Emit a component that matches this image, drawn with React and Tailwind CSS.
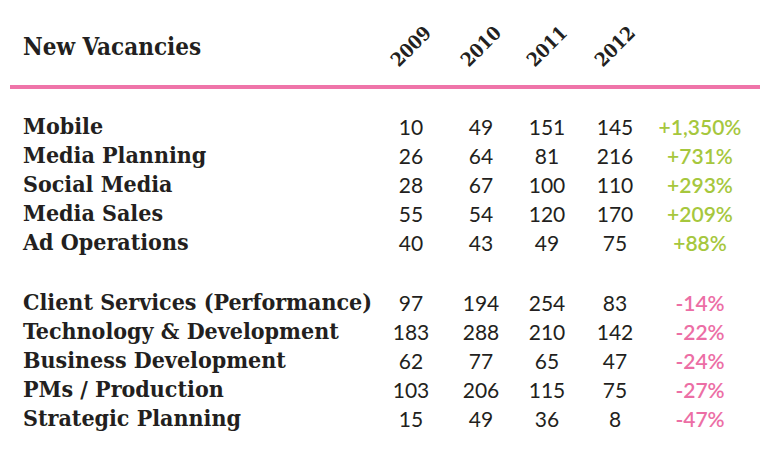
import React from "react";

const growth = [
  { name: "Mobile", values: [10, 49, 151, 145], change: "+1,350%" },
  { name: "Media Planning", values: [26, 64, 81, 216], change: "+731%" },
  { name: "Social Media", values: [28, 67, 100, 110], change: "+293%" },
  { name: "Media Sales", values: [55, 54, 120, 170], change: "+209%" },
  { name: "Ad Operations", values: [40, 43, 49, 75], change: "+88%" },
];

const decline = [
  { name: "Client Services (Performance)", values: [97, 194, 254, 83], change: "-14%" },
  { name: "Technology & Development", values: [183, 288, 210, 142], change: "-22%" },
  { name: "Business Development", values: [62, 77, 65, 47], change: "-24%" },
  { name: "PMs / Production", values: [103, 206, 115, 75], change: "-27%" },
  { name: "Strategic Planning", values: [15, 49, 36, 8], change: "-47%" },
];

const years = ["2009", "2010", "2011", "2012"];

const cols = "grid grid-cols-[353px_70px_70px_62px_74px_96px]";
const slab = "font-['DejaVu_Serif_Condensed','DejaVu_Serif',serif] font-stretch-condensed font-bold";
const sans = "font-['Lato',sans-serif]";

const Row = ({ row, positive }) => (
  <div className={`${cols} h-[29px] items-center`}>
    <div className={`${slab} text-[23px] text-[#231f20] whitespace-nowrap`}>{row.name}</div>
    {row.values.map((v, i) => (
      <div key={i} className={`${sans} text-[21px] text-[#231f20] text-center`}>
        {v}
      </div>
    ))}
    <div
      className={`${sans} text-[21px] font-semibold text-center ${
        positive ? "text-[#a6c73d]" : "text-[#ec6ea5]"
      }`}
    >
      {row.change}
    </div>
  </div>
);

export default function App() {
  return (
    <div className="w-[770px] h-[468px] bg-white overflow-hidden">
      {/* Header */}
      <div className={`${cols} h-[85px] items-center pt-2 pl-[23px]`}>
        <div className={`${slab} text-[24px] text-[#231f20]`}>New Vacancies</div>
        {years.map((y) => (
          <div key={y} className="flex justify-center">
            <span className={`${slab} text-[19px] text-[#231f20] inline-block -rotate-45`}>{y}</span>
          </div>
        ))}
        <div />
      </div>

      <div className="mx-[10px] h-[4px] bg-[#ef74a9]" />

      {/* Rows */}
      <div className="pl-[23px] pt-[20px]">
        {growth.map((row) => (
          <Row key={row.name} row={row} positive />
        ))}
        <div className="h-[31px]" />
        {decline.map((row) => (
          <Row key={row.name} row={row} />
        ))}
      </div>
    </div>
  );
}
